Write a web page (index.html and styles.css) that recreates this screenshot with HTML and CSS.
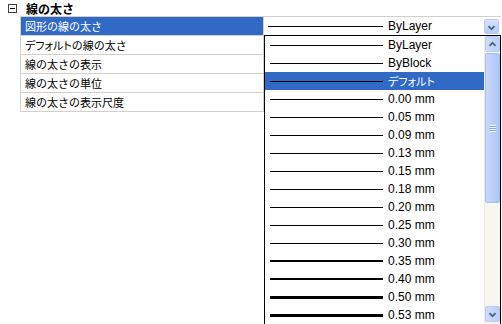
FILE: index.html
```html
<!DOCTYPE html>
<html lang="ja">
<head>
    <meta charset="UTF-8">
    <meta name="viewport" content="width=device-width, initial-scale=1.0">
    <title>線の太さ</title>
    <link rel="stylesheet" href="styles.css">
</head>
<body>

    <div class="panel">
        <div class="group-head">
            <span class="toggle"></span>
            <span class="group-title">線の太さ</span>
        </div>

        <div class="grid">
            <div class="row selected">
                <div class="name">図形の線の太さ</div>
                <div class="value">
                    <span class="sample w1"></span>
                    <span class="label">ByLayer</span>
                    <span class="drop-btn">
                        <svg width="15" height="15" viewBox="0 0 15 15"><path d="M4 6 L7.5 9.5 L11 6" fill="none" stroke="#4d6185" stroke-width="2"/></svg>
                    </span>
                </div>
            </div>
            <div class="row"><div class="name"><span class="kana">デフォルト</span>の線の太さ</div><div class="value"></div></div>
            <div class="row"><div class="name">線の太さの表示</div><div class="value"></div></div>
            <div class="row"><div class="name">線の太さの単位</div><div class="value"></div></div>
            <div class="row"><div class="name">線の太さの表示尺度</div><div class="value"></div></div>
        </div>

        <!-- open list of the first value -->
        <div class="dropdown">
            <ul class="options">
                <li><span class="sample w1"></span>ByLayer</li>
                <li><span class="sample w1"></span>ByBlock</li>
                <li class="active"><span class="sample w1"></span><span class="kana">デフォルト</span></li>
                <li><span class="sample w1"></span>0.00 mm</li>
                <li><span class="sample w1"></span>0.05 mm</li>
                <li><span class="sample w1"></span>0.09 mm</li>
                <li><span class="sample w1"></span>0.13 mm</li>
                <li><span class="sample w1"></span>0.15 mm</li>
                <li><span class="sample w1"></span>0.18 mm</li>
                <li><span class="sample w1"></span>0.20 mm</li>
                <li><span class="sample w1"></span>0.25 mm</li>
                <li><span class="sample w1"></span>0.30 mm</li>
                <li><span class="sample w2"></span>0.35 mm</li>
                <li><span class="sample w2"></span>0.40 mm</li>
                <li><span class="sample w3"></span>0.50 mm</li>
                <li><span class="sample w3"></span>0.53 mm</li>
            </ul>
            <div class="scrollbar">
                <div class="sb-btn">
                    <svg width="15" height="15" viewBox="0 0 15 15"><path d="M4 9 L7.5 5.5 L11 9" fill="none" stroke="#4d6185" stroke-width="2"/></svg>
                </div>
                <div class="sb-thumb"><span class="grip"></span></div>
                <div class="sb-track"></div>
                <div class="sb-btn">
                    <svg width="15" height="15" viewBox="0 0 15 15"><path d="M4 6 L7.5 9.5 L11 6" fill="none" stroke="#4d6185" stroke-width="2"/></svg>
                </div>
            </div>
        </div>
    </div>

</body>
</html>
```

FILE: styles.css
```css
* {
    box-sizing: border-box;
    margin: 0;
    padding: 0;
}

body {
    background: #fff;
    font-family: "Liberation Sans", "Noto Sans CJK JP", sans-serif;
    font-size: 12px;
    color: #000;
    overflow: hidden;
}

.panel {
    position: relative;
    width: 502px;
    height: 324px;
}

/* Group header */
.group-head {
    display: flex;
    align-items: center;
    height: 16px;
    padding-left: 8px;
}

.toggle {
    position: relative;
    width: 9px;
    height: 9px;
    border: 1px solid #404040;
    margin-right: 9px;
}

.toggle::after {
    content: "";
    position: absolute;
    left: 1px;
    top: 3px;
    width: 5px;
    height: 1px;
    background: #000;
}

.group-title {
    font-family: "Noto Sans CJK JP", sans-serif;
    font-weight: bold;
    font-size: 12px;
}

/* katakana sits narrower in the original UI font */
.kana {
    font-family: "Noto Sans CJK JP", sans-serif;
    font-feature-settings: "palt";
}

/* Property grid */
.grid {
    margin-left: 20px;
    width: 481px;
    border-top: 1px solid #d4d0c8;
    border-left: 1px solid #d4d0c8;
}

.row {
    display: flex;
    height: 19px;
    border-bottom: 1px solid #d4d0c8;
}

.name {
    width: 243px;
    padding-left: 4px;
    border-right: 1px solid #d4d0c8;
    font-family: "Noto Sans CJK JP", sans-serif;
    font-size: 11px;
    line-height: 18px;
    white-space: nowrap;
}

.row.selected .name {
    background: #316ac5;
    color: #fff;
}

.value {
    flex: 1;
    display: flex;
    align-items: center;
    padding-left: 4px;
}

.value .sample {
    width: 115px;
}

.label {
    margin-left: 5px;
}

.drop-btn {
    display: flex;
    margin-left: auto;
    margin-right: 2px;
    width: 15px;
    height: 15px;
    border: 1px solid #b9cbf3;
    border-radius: 2px;
    background: linear-gradient(#d9e4fd, #b6cbf8);
}

.sample {
    display: block;
    width: 113px;
    background: #000;
}

.w1 { height: 1px; }
.w2 { height: 2px; }
.w3 { height: 3px; }

/* Open list */
.dropdown {
    position: absolute;
    left: 264px;
    top: 35px;
    width: 237px;
    height: 300px;
    display: flex;
    border: 1px solid #000;
    background: #fff;
}

.options {
    list-style: none;
    width: 219px;
}

.options li {
    display: flex;
    align-items: center;
    height: 18px;
    padding-left: 5px;
}

.options li .sample {
    margin-right: 5px;
}

.options li .kana {
    font-size: 11px;
}

.options li.active {
    background: #316ac5;
    color: #fff;
}

.scrollbar {
    width: 16px;
    display: flex;
    flex-direction: column;
    background: #f7f6f0;
    border-left: 1px solid #eeede5;
}

.sb-btn {
    display: flex;
    width: 15px;
    height: 16px;
    border: 1px solid #b9cbf3;
    border-radius: 2px;
    background: linear-gradient(90deg, #cfdcfc, #bccff9);
}

.sb-thumb {
    display: flex;
    align-items: center;
    justify-content: center;
    width: 15px;
    height: 150px;
    margin-top: 1px;
    border: 1px solid #a9bff0;
    border-radius: 2px;
    background: linear-gradient(90deg, #c9d8fc, #b9cdf9 60%, #aec5f6);
}

.grip {
    width: 7px;
    height: 7px;
    background: repeating-linear-gradient(#eef3fe 0, #eef3fe 1px, #8ca8e6 1px, #8ca8e6 2px);
}

.sb-track {
    flex: 1;
    max-height: 103px;
}
```
